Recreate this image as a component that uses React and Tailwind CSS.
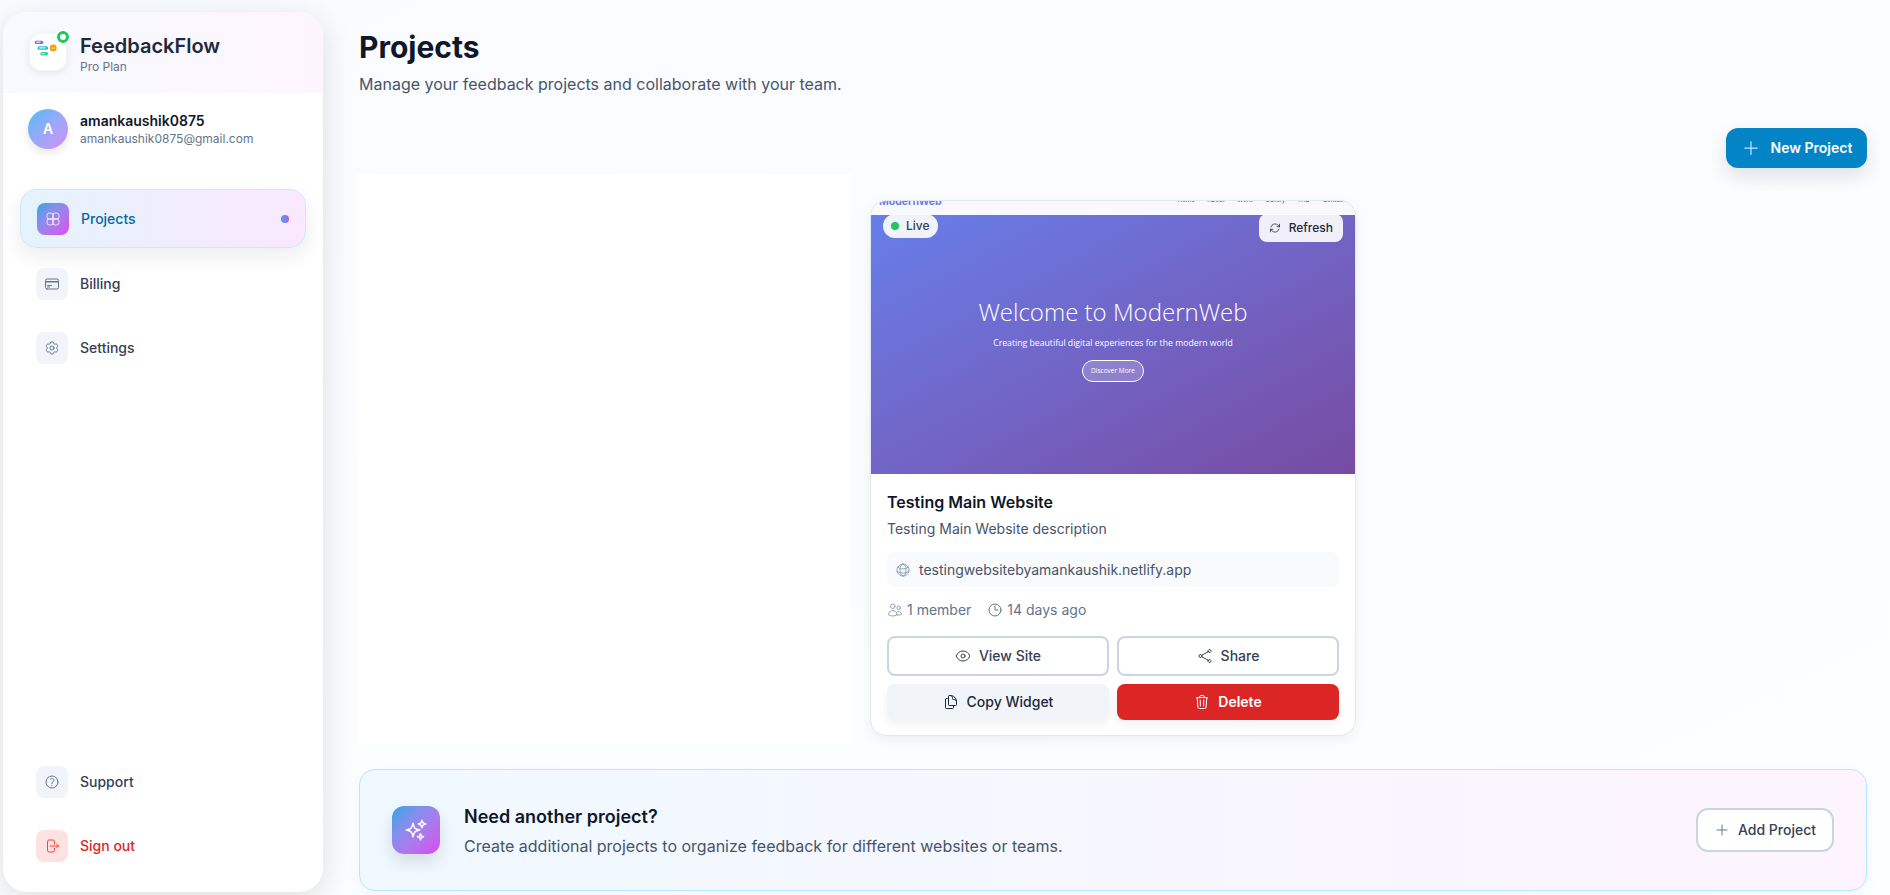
import {
  HiOutlineArrowPath,
  HiOutlineArrowRightOnRectangle,
  HiOutlineClock,
  HiOutlineCog6Tooth,
  HiOutlineCreditCard,
  HiOutlineDocumentDuplicate,
  HiOutlineEye,
  HiOutlineGlobeAlt,
  HiOutlinePlus,
  HiOutlineQuestionMarkCircle,
  HiOutlineShare,
  HiOutlineSparkles,
  HiOutlineTrash,
  HiOutlineUsers,
} from 'react-icons/hi2';

const fontInter = { fontFamily: 'Inter, "Noto Sans", sans-serif' };

const Logo = () => (
  <div className="relative w-[38px] h-[38px] rounded-xl bg-white shadow-[0_2px_8px_rgba(15,23,42,0.08)] border border-slate-100 shrink-0">
    <svg viewBox="0 0 38 38" className="w-full h-full">
      <rect x="5" y="7" width="9" height="3.6" rx="1.6" fill="#8b5cf6" />
      <rect x="6.4" y="8" width="5" height="1.4" rx="0.7" fill="#ddd6fe" />
      <rect x="8" y="13" width="11" height="3.6" rx="1.6" fill="#22b8e0" />
      <rect x="9.5" y="14" width="7" height="1.4" rx="0.7" fill="#e0f2fe" />
      <rect x="11" y="19" width="8" height="3.6" rx="1.6" fill="#34d399" />
      <rect x="12.4" y="20" width="3" height="1.4" rx="0.7" fill="#d1fae5" />
      <circle cx="24.5" cy="14.8" r="3.6" fill="#f59e0b" />
      <rect x="23" y="14.4" width="3" height="1" fill="#fef3c7" />
    </svg>
    <span className="absolute -top-[3px] -right-[3px] w-3 h-3 rounded-full border-[3px] border-[#22c55e] bg-white shadow-[0_0_0_1px_white]" />
  </div>
);

const ProjectsGlyph = () => (
  <svg viewBox="0 0 16 16" fill="none" stroke="white" strokeOpacity="0.8" strokeWidth="1" className="w-4 h-4">
    <rect x="2" y="2" width="6.4" height="6.4" rx="2.6" />
    <rect x="7.6" y="2" width="6.4" height="6.4" rx="2.6" />
    <rect x="2" y="7.6" width="6.4" height="6.4" rx="2.6" />
    <rect x="7.6" y="7.6" width="6.4" height="6.4" rx="2.6" />
  </svg>
);

const NavItem = ({ icon: Icon, label, danger }) => (
  <a className="flex items-center gap-3 pl-[33px] h-8">
    <span className={`w-8 h-8 rounded-lg flex items-center justify-center ${danger ? 'bg-[#fee2e2]' : 'bg-[#f1f5f9]'}`}>
      <Icon className={`w-4 h-4 ${danger ? 'text-[#ef4444]' : 'text-[#64748b]'}`} />
    </span>
    <span className={`text-sm font-medium ${danger ? 'text-[#dc2626]' : 'text-[#334155]'}`}>{label}</span>
  </a>
);

const Sidebar = () => (
  <aside className="w-80 h-full rounded-3xl bg-white flex flex-col overflow-hidden shadow-[0_8px_32px_rgba(0,0,0,0.12)]">
    <div className="h-[81px] shrink-0 flex items-center gap-[13px] pl-[26px] pb-[2px] bg-gradient-to-r from-[#f7fafe] to-[#fdf5fe]">
      <Logo />
      <div className="pt-[4px]">
        <div className="text-xl leading-7 font-semibold text-[#1e293b]">FeedbackFlow</div>
        <div className="-mt-[1px] text-xs leading-4 text-[#64748b]">Pro Plan</div>
      </div>
    </div>
    <div className="flex items-center gap-3 pl-[25px] pt-4">
      <div className="w-10 h-10 rounded-full flex items-center justify-center text-white text-sm font-semibold bg-gradient-to-br from-[#38bdf8] to-[#d08cf8] shadow-[0_4px_10px_rgba(15,23,42,0.1)]">
        A
      </div>
      <div>
        <div className="text-sm leading-5 font-semibold text-[#0f172a]">amankaushik0875</div>
        <div className="text-xs leading-4 text-[#64748b]">amankaushik0875@gmail.com</div>
      </div>
    </div>
    <nav className="flex flex-col px-[17px] mt-10">
      <a className="flex items-center h-[59px] pl-[16px] pr-4 rounded-2xl border border-[#cfe8fb] bg-gradient-to-r from-[#e3f3fc] to-[#fae8fd] shadow-[0_8px_20px_rgba(15,23,42,0.08)]">
        <span className="w-8 h-8 rounded-lg flex items-center justify-center bg-gradient-to-br from-[#0ea5e9] to-[#d946ef]">
          <ProjectsGlyph />
        </span>
        <span className="ml-3 text-sm font-medium text-[#0369a1]">Projects</span>
        <span className="ml-auto w-2 h-2 rounded-full bg-gradient-to-r from-[#0ea5e9] to-[#a855f7]" />
      </a>
    </nav>
    <div className="flex flex-col gap-8 mt-5">
      <NavItem icon={HiOutlineCreditCard} label="Billing" />
      <NavItem icon={HiOutlineCog6Tooth} label="Settings" />
    </div>
    <div className="flex flex-col gap-8 mt-auto mb-[30px]">
      <NavItem icon={HiOutlineQuestionMarkCircle} label="Support" />
      <NavItem icon={HiOutlineArrowRightOnRectangle} label="Sign out" danger />
    </div>
  </aside>
);

const ProjectPreview = () => (
  <div className="relative h-[273px] overflow-hidden rounded-t-2xl">
    <div className="h-[14px] bg-[#f8f8fd] overflow-hidden flex justify-between pl-2 pr-[10px]">
      <span className="text-[10.5px] leading-[11px] -mt-[5px] font-bold text-[#667eea]">ModernWeb</span>
      <span className="flex gap-[13px] text-[6px] leading-[6px] -mt-[4px] text-[#334155]">
        <span>Home</span><span>About</span><span>Work</span><span>Gallery</span><span>FAQ</span><span>Contact</span>
      </span>
    </div>
    <div className="h-[259px] flex flex-col items-center pt-[81px] bg-gradient-to-br from-[#667eea] to-[#764ba2]" style={{ fontFamily: '"Open Sans", sans-serif' }}>
      <div className="text-2xl leading-8 font-light text-white">Welcome to ModernWeb</div>
      <div className="mt-2 text-[8.7px] leading-[14px] text-white">Creating beautiful digital experiences for the modern world</div>
      <div className="mt-[10px] w-[62px] h-[22px] rounded-[11px] border border-white bg-white/20 flex items-center justify-center text-[6.5px] text-white">
        Discover More
      </div>
    </div>
    <div className="absolute left-3 top-[13px] h-6 pl-2 pr-[8px] rounded-full bg-white/90 flex items-center gap-[7px] text-xs font-medium text-[#334155]">
      <span className="w-2 h-2 rounded-full bg-[#22c55e]" />
      Live
    </div>
    <button className="absolute right-3 top-[13px] h-7 px-[10px] rounded-lg bg-white/90 flex items-center gap-2 text-xs font-medium text-[#1e293b]">
      <HiOutlineArrowPath className="w-3 h-3" />
      Refresh
    </button>
  </div>
);

const ProjectCard = () => (
  <div className="w-[486px] mt-[26px] h-[536px] rounded-2xl bg-white border border-[#e2e8f0] shadow-[0_4px_14px_rgba(15,23,42,0.06)] flex flex-col">
    <ProjectPreview />
    <div className="px-4 pt-4">
      <h3 className="text-base leading-6 font-semibold text-[#0f172a]">Testing Main Website</h3>
      <p className="mt-[5px] text-sm leading-5 text-[#475569]">Testing Main Website description</p>
      <div className="mt-[13px] h-[35px] px-2 rounded-lg bg-[#f8fafc] flex items-center gap-2 text-sm text-[#475569]">
        <HiOutlineGlobeAlt className="w-4 h-4 text-[#94a3b8]" />
        testingwebsitebyamankaushik.netlify.app
      </div>
      <div className="mt-[13px] flex items-center gap-4 text-sm text-[#64748b]">
        <span className="flex items-center gap-1">
          <HiOutlineUsers className="w-4 h-4 text-[#94a3b8]" />
          1 member
        </span>
        <span className="flex items-center gap-1">
          <HiOutlineClock className="w-4 h-4" />
          14 days ago
        </span>
      </div>
      <div className="mt-4 grid grid-cols-2 gap-2">
        <button className="h-10 rounded-lg border-2 border-[#cbd5e1] bg-white flex items-center justify-center gap-2 text-sm font-medium text-[#334155]">
          <HiOutlineEye className="w-4 h-4" />
          View Site
        </button>
        <button className="h-10 rounded-lg border-2 border-[#cbd5e1] bg-white flex items-center justify-center gap-2 text-sm font-medium text-[#334155]">
          <HiOutlineShare className="w-4 h-4" />
          Share
        </button>
        <button className="h-9 rounded-lg bg-[#f1f5f9] flex items-center justify-center gap-2 text-sm font-medium text-[#1e293b] shadow-[0_4px_10px_rgba(15,23,42,0.06)]">
          <HiOutlineDocumentDuplicate className="w-4 h-4" />
          Copy Widget
        </button>
        <button className="h-9 rounded-lg bg-[#dc2626] flex items-center justify-center gap-2 text-sm font-semibold text-white shadow-[0_4px_10px_rgba(15,23,42,0.06)]">
          <HiOutlineTrash className="w-4 h-4" />
          Delete
        </button>
      </div>
    </div>
  </div>
);

const Banner = () => (
  <div className="mt-[25px] h-[122px] rounded-2xl border border-[#bae6fd] bg-gradient-to-r from-[#f0f9ff] to-[#fdf4ff] flex items-center px-8 shadow-[0_4px_14px_rgba(15,23,42,0.04)]">
    <div className="w-12 h-12 rounded-xl flex items-center justify-center bg-gradient-to-br from-[#0ea5e9] to-[#d946ef] shadow-[0_8px_16px_rgba(15,23,42,0.12)]">
      <HiOutlineSparkles className="w-6 h-6 text-white" />
    </div>
    <div className="ml-6">
      <h3 className="text-lg leading-7 font-semibold text-[#0f172a]">Need another project?</h3>
      <p className="mt-[3px] text-base leading-6 text-[#475569]">Create additional projects to organize feedback for different websites or teams.</p>
    </div>
    <button className="ml-auto w-[138px] h-[44px] rounded-xl border-2 border-[#cbd5e1] bg-white flex items-center justify-center gap-2 text-sm font-medium text-[#334155]">
      <HiOutlinePlus className="w-4 h-4 text-[#64748b]" />
      Add Project
    </button>
  </div>
);

export default function App() {
  return (
    <div className="w-full h-[895px] overflow-hidden flex bg-gradient-to-br from-[#f9fbfe] to-[#fdfeff]" style={fontInter}>
      <div className="shrink-0 pl-[3px] pt-3 pb-[3px]">
        <Sidebar />
      </div>
      <main className="flex-1 min-w-0 pl-[36px] pr-[23px] pt-[29px]">
        <h1 className="text-3xl leading-9 font-bold text-[#0f172a]">Projects</h1>
        <p className="mt-[7px] text-base leading-6 text-[#475569]">Manage your feedback projects and collaborate with your team.</p>
        <div className="flex justify-end mt-8 h-0">
          <button className="w-[141px] h-10 rounded-xl bg-[#0284c7] flex items-center justify-center gap-[10px] text-sm font-semibold text-white shadow-[0_8px_20px_rgba(15,23,42,0.12)] shrink-0">
            <HiOutlinePlus className="w-5 h-5 text-[#bae6fd]" />
            New Project
          </button>
        </div>
        <div className="flex gap-[19px] mt-[46px] -ml-[2px] h-[570px]">
          <div className="w-[494px] h-[570px] bg-white" />
          <ProjectCard />
        </div>
        <Banner />
      </main>
    </div>
  );
}
